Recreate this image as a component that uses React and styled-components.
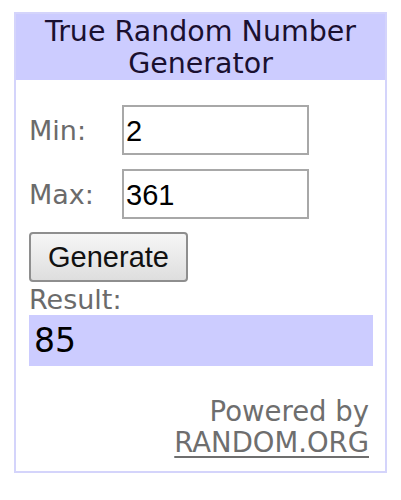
import { createGlobalStyle, styled } from "styled-components";

const GlobalStyle = createGlobalStyle`
  body {
    margin: 0;
    background: #ffffff;
    font-family: "DejaVu Sans", Verdana, sans-serif;
  }
`;

const Widget = styled.div`
  box-sizing: border-box;
  margin: 12px 0 0 14px;
  width: 373px;
  height: 461px;
  border: 2px solid #d4d4fb;
  background: #ffffff;
`;

const Header = styled.div`
  height: 66px;
  padding-top: 2px;
  box-sizing: border-box;
  background: #ccccff;
  color: #1a1030;
  font-size: 28.5px;
  line-height: 32px;
  text-align: center;
`;

const Body = styled.div`
  padding: 25px 12px 0 13px;
`;

const Row = styled.div`
  display: flex;
  align-items: center;
  margin-bottom: 14px;
`;

const Label = styled.label`
  width: 93px;
  font-size: 27px;
  color: #6b6b6b;
`;

const Input = styled.input`
  box-sizing: border-box;
  width: 187px;
  height: 50px;
  padding: 2px 0 0 2px;
  border: 2px solid #a8a8a8;
  font-family: "Liberation Sans", Arial, sans-serif;
  font-size: 29px;
  color: #000;
  outline: none;
`;

const Button = styled.button`
  box-sizing: border-box;
  width: 159px;
  height: 50px;
  margin-top: -1px;
  border: 2px solid #8e8e8e;
  border-radius: 4px;
  background: linear-gradient(#f6f6f6, #dedede);
  font-family: "Liberation Sans", Arial, sans-serif;
  font-size: 29px;
  color: #111;
  padding: 0;
`;

const ResultLabel = styled.div`
  margin-top: 2px;
  font-size: 27px;
  line-height: 31px;
  color: #6b6b6b;
`;

const ResultBox = styled.div`
  box-sizing: border-box;
  height: 51px;
  padding-left: 5px;
  background: #ccccff;
  font-size: 33px;
  line-height: 51px;
  color: #000;
`;

const Credit = styled.div`
  margin-top: 30px;
  padding-right: 4px;
  text-align: right;
  font-size: 27.5px;
  line-height: 31px;
  color: #6e6e6e;
`;

const Link = styled.a`
  color: #6e6e6e;
  text-decoration: underline;
  text-underline-offset: 4px;
`;

export default function App() {
  return (
    <>
      <GlobalStyle />
      <Widget>
        <Header>
          True Random Number
          <br />
          Generator
        </Header>
        <Body>
          <Row>
            <Label>Min:</Label>
            <Input defaultValue="2" />
          </Row>
          <Row>
            <Label>Max:</Label>
            <Input defaultValue="361" />
          </Row>
          <Button>Generate</Button>
          <ResultLabel>Result:</ResultLabel>
          <ResultBox>85</ResultBox>
          <Credit>
            Powered by
            <br />
            <Link href="#">RANDOM.ORG</Link>
          </Credit>
        </Body>
      </Widget>
    </>
  );
}
